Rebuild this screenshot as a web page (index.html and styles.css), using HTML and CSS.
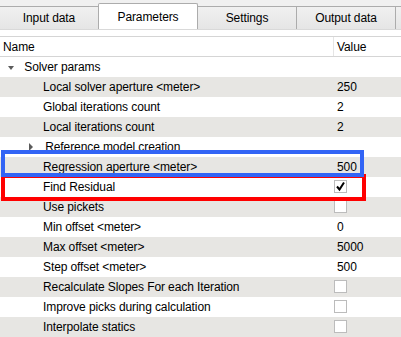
FILE: index.html
```html
<!DOCTYPE html>
<html lang="en">
<head>
  <meta charset="UTF-8">
  <link rel="stylesheet" href="styles.css">
</head>
<body>

<div class="tabs">
  <div class="tab">Input data</div>
  <div class="tab active">Parameters</div>
  <div class="tab">Settings</div>
  <div class="tab">Output data</div>
  <div class="tab"></div>
</div>

<div class="pane">
  <div class="tree">
    <div class="header">
      <div class="cell name">Name</div>
      <div class="cell value">Value</div>
    </div>

    <div class="row">
      <div class="cell name level0">
        <svg class="arrow" width="6" height="6" viewBox="0 0 6 6"><path d="M0 1 H6 L3 5 Z" fill="#5b5b5b"/></svg>
        Solver params
      </div>
      <div class="cell value"></div>
    </div>
    <div class="row alt">
      <div class="cell name">Local solver aperture &lt;meter&gt;</div>
      <div class="cell value">250</div>
    </div>
    <div class="row">
      <div class="cell name">Global iterations count</div>
      <div class="cell value">2</div>
    </div>
    <div class="row alt">
      <div class="cell name">Local iterations count</div>
      <div class="cell value">2</div>
    </div>
    <div class="row">
      <div class="cell name level1">
        <svg class="arrow" width="5" height="8" viewBox="0 0 5 8"><path d="M0 0 L4 4 L0 8 Z" fill="#5b5b5b"/></svg>
        Reference model creation
      </div>
      <div class="cell value"></div>
    </div>
    <div class="row alt">
      <div class="cell name">Regression aperture &lt;meter&gt;</div>
      <div class="cell value">500</div>
    </div>
    <div class="row">
      <div class="cell name">Find Residual</div>
      <div class="cell value"><span class="check checked"><svg width="11" height="11" viewBox="0 0 11 11"><path d="M2 5.5 L4.5 8.5 L9 1.5" fill="none" stroke="#000" stroke-width="2"/></svg></span></div>
    </div>
    <div class="row alt">
      <div class="cell name">Use pickets</div>
      <div class="cell value"><span class="check"></span></div>
    </div>
    <div class="row">
      <div class="cell name">Min offset &lt;meter&gt;</div>
      <div class="cell value">0</div>
    </div>
    <div class="row alt">
      <div class="cell name">Max offset &lt;meter&gt;</div>
      <div class="cell value">5000</div>
    </div>
    <div class="row">
      <div class="cell name">Step offset &lt;meter&gt;</div>
      <div class="cell value">500</div>
    </div>
    <div class="row alt">
      <div class="cell name">Recalculate Slopes For each Iteration</div>
      <div class="cell value"><span class="check"></span></div>
    </div>
    <div class="row">
      <div class="cell name">Improve picks during calculation</div>
      <div class="cell value"><span class="check"></span></div>
    </div>
    <div class="row alt">
      <div class="cell name">Interpolate statics</div>
      <div class="cell value"><span class="check"></span></div>
    </div>

    <!-- highlight frames drawn over the list -->
    <div class="mark red"></div>
    <div class="mark blue"></div>
  </div>
</div>

</body>
</html>
```

FILE: styles.css
```css
html, body {
  height: 337px;
}

body {
  margin: 0;
  background-color: #f0f0f0;
  font-family: "Liberation Sans", Arial, sans-serif;
  font-size: 12px;
  letter-spacing: -0.1px;
  color: #000;
  overflow: hidden;
}

.tabs {
  display: flex;
  align-items: flex-end;
  height: 29px;
  margin-left: -1px;
  overflow: hidden;
}

.tab {
  width: 98px;
  height: 22px;
  line-height: 22px;
  text-align: center;
  background: linear-gradient(#f0f0f0, #e5e5e5);
  border: 1px solid #acacac;
  border-bottom: none;
  border-left: none;
  flex-shrink: 0;
}

.tab:first-child {
  border-left: 1px solid #acacac;
}

.tab.active {
  height: 26px;
  line-height: 26px;
  background: #fff;
  border-left: 1px solid #acacac;
  border-radius: 2px 2px 0 0;
  margin-left: -1px;
  margin-bottom: -1px;
  position: relative;
  z-index: 1;
}

.pane {
  background: #fff;
  border-top: 1px solid #d9d9d9;
  padding-top: 6px;
  height: 301px;
  overflow: hidden;
}

.tree {
  position: relative;
  border-top: 1px solid #d5d5d5;
}

.header,
.row {
  display: grid;
  grid-template-columns: 333px 1fr;
}

.header {
  height: 19px;
  line-height: 21px;
  border-bottom: 1px solid #d5d5d5;
  overflow: hidden;
}

.header .value {
  border-left: 1px solid #e5e5e5;
  padding-left: 3px;
}

.header .name {
  padding-left: 3px;
}

.row {
  height: 20px;
  line-height: 20px;
}

.row.alt {
  background: #e7e6e3;
}

.cell {
  white-space: nowrap;
  overflow: hidden;
}

.row .name {
  padding-left: 43px;
}

.row .name.level0 {
  padding-left: 8px;
}

.row .name.level1 {
  padding-left: 29px;
}

.row .value {
  padding-left: 4px;
}

.arrow {
  margin-right: 7px;
}

.level1 .arrow {
  margin-right: 8px;
}

.check {
  display: inline-block;
  width: 11px;
  height: 11px;
  border: 1px solid #bcbcbc;
  background: #fff;
  margin-left: -3px;
  margin-top: 3px;
  vertical-align: top;
}

.check svg {
  display: block;
}

.mark {
  position: absolute;
  left: 1px;
  box-sizing: border-box;
  border: 4px solid;
}

.mark.blue {
  top: 113px;
  width: 363px;
  height: 27px;
  border-color: #3264f5;
}

.mark.red {
  top: 137px;
  width: 365px;
  height: 27px;
  border-color: #ff0000;
}
```
